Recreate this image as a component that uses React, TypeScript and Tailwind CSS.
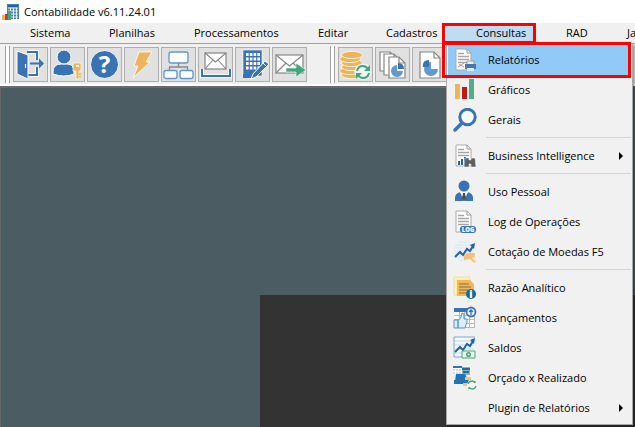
import React from "react";

const B = "#3a73b3";
const O = "#ecb45c";
const G = "#3fa77c";

function AppLogo() {
  return (
    <svg width="18" height="18" viewBox="0 0 18 18" aria-hidden="true">
      <rect x="5" y="1" width="12" height="15" fill="#4a80b5" />
      <rect x="6" y="2" width="10" height="2" fill="#2f5f96" />
      <path d="M6 5h10M6 8h10M6 11h10M6 14h10M8.5 5v11M11.5 5v11M14.5 5v11" stroke="#e8f1f8" strokeWidth="1" />
      <rect x="0" y="12" width="3" height="5" fill={O} />
      <rect x="3" y="11" width="3" height="6" fill="#d0392b" />
      <rect x="6" y="8" width="3" height="9" fill={G} />
    </svg>
  );
}

function Sheet({ x, y, w, h }: { x: number; y: number; w: number; h: number }) {
  return (
    <g>
      <path d={`M${x} ${y}h${w - 6}l6 6v${h - 6}h${-w}z`} fill="#fff" stroke="#858585" strokeWidth="1.2" />
      <path d={`M${x + w - 6} ${y}v6h6`} fill="none" stroke="#858585" strokeWidth="1.2" />
    </g>
  );
}

const tools: Record<string, React.ReactNode> = {
  Sair: (
    <g>
      <path d="M14 4h9v8M23 19v8h-9" fill="none" stroke="#fff" strokeWidth="4" />
      <path d="M13 4h10v8M23 19v8H13" fill="none" stroke={B} strokeWidth="2" />
      <path d="M3 3l11 4v24L3 26z" fill={B} stroke="#fff" strokeWidth="1" />
      <path d="M16 15.5h9" fill="none" stroke={B} strokeWidth="2" />
      <path d="M25 10.500l5 5-5 5z" fill={B} />
      <path d="M11.500 16v4" stroke="#fff" strokeWidth="1.200" />
    </g>
  ),
  Usuários: (
    <g>
      <path d="M2 24q0-8 8-8h6q7 0 7 8v2q-10 4-21 0z" fill={B} stroke="#fff" />
      <circle cx="13" cy="9" r="7" fill={B} stroke="#fff" />
      <path d="M22 15h8v8h-2v8h-3v-8h-3z" fill={O} stroke="#fff" strokeWidth=".7" />
      <path d="M25 17h3v2h-3z" fill="#fff" />
      <path d="M28 26h2M28 29h2" stroke={O} strokeWidth="1.500" />
    </g>
  ),
  Ajuda: (
    <g>
      <circle cx="16.500" cy="16.500" r="14" fill={B} stroke="#fff" />
      <text x="16.500" y="25" textAnchor="middle" fontSize="24" fontWeight="700" fill="#fff">
        ?
      </text>
    </g>
  ),
  Atalhos: <path d="M14 4h13l-6 10h4L8 30l5-12H9z" fill={O} stroke="#fff" strokeWidth=".8" />,
  Organograma: (
    <g>
      <path d="M16.500 15v4M7.500 22v-3h18v3" fill="none" stroke="#888" strokeWidth="1.300" />
      <rect x="7" y="4" width="19" height="11" rx="2" fill="#fff" stroke="#5c96d0" strokeWidth="1.300" />
      <rect x="2" y="22.500" width="13" height="8" rx="2" fill="#fff" stroke="#5c96d0" strokeWidth="1.300" />
      <rect x="18" y="22.500" width="13" height="8" rx="2" fill="#fff" stroke="#5c96d0" strokeWidth="1.300" />
    </g>
  ),
  Caixa: (
    <g>
      <rect x="6" y="5" width="21" height="16" fill="#fff" stroke="#858585" strokeWidth="1.200" />
      <path d="M6 5l10.500 9L27 5M6 21l8-9M27 21l-8-9" fill="none" stroke="#858585" strokeWidth="1.100" />
      <path d="M3 21v7h28v-7" fill="none" stroke="#fff" strokeWidth="3.500" />
      <path d="M3 21v7h28v-7" fill="none" stroke={B} strokeWidth="2" />
    </g>
  ),
  Empresa: (
    <g>
      <path d="M7 2h19v26H7z" fill={B} stroke="#fff" strokeWidth=".6" />
      <path d="M10 6.500h14M10 11h14M10 15.500h14M10 20h14" stroke="#fff" strokeWidth="2.800" strokeDasharray="2.600 1.200" />
      <path d="M7 26h12v4H7z" fill={B} />
      <path d="M29 13l4 3-13 13-5 2 2-5z" fill={B} stroke="#fff" />
      <path d="M27 15l4 4" stroke="#fff" />
    </g>
  ),
  Enviar: (
    <g>
      <rect x="3" y="7" width="27" height="18" fill="#fff" stroke="#858585" strokeWidth="1.200" />
      <path d="M3 7l13.500 11L30 7M3 25l10-10M30 25L20 15" fill="none" stroke="#858585" strokeWidth="1.200" />
      <path d="M13 20h10v-5l10 7-10 7v-5H13z" fill={G} stroke="#fff" strokeWidth=".6" />
    </g>
  ),
  Moedas: (
    <g>
      <g fill={O} stroke="#fff3d8">
        {[26, 22, 18, 14, 10, 6].map((y, i) => (
          <ellipse key={y} cx={i % 3 === 1 ? 11 : 13} cy={y + 1} rx="10.500" ry="3.600" />
        ))}
      </g>
      <circle cx="24" cy="24" r="8.500" fill="#f3f3f3" />
      <path d="M18 23q1-5 6-5 3 0 5 3M30 25q-1 5-6 5-3 0-5-3" fill="none" stroke={G} strokeWidth="2" />
      <path d="M31 17v6h-6zM17 31v-6h6z" fill={G} />
    </g>
  ),
  Relatórios: (
    <g>
      <Sheet x={4} y={4} w={16} h={19} />
      <Sheet x={8} y={6} w={16} h={21} />
      <Sheet x={13} y={9} w={16} h={21} />
      <path d="M21 17v6h6a6 6 0 1 1-6-6z" fill="#6298d0" />
      <path d="M22 15q6 0 6 6h-6z" fill={B} />
    </g>
  ),
  Gráfico: (
    <g>
      <Sheet x={7} y={4} w={20} h={26} />
      <path d="M18 14v7h7a7 7 0 1 1-7-7z" fill="#6298d0" />
      <path d="M16 12v7h-6q-1-7 6-7z" fill={B} />
    </g>
  ),
};

function Page() {
  return (
    <g>
      <path d="M3 1h11l4 4v17H3z" fill="#fff" stroke="#aaa" />
      <path d="M14 1v4h4" fill="none" stroke="#999" />
      <path d="M5 5.500h6M5 8.500h11M5 11.500h11M5 14.500h11" stroke="#a6a6a6" strokeWidth="1.400" />
    </g>
  );
}

function Trend() {
  return (
    <g>
      <path d="M2 16l5-5 3 3 4-6 3 2 3-5" fill="none" stroke="#2262a8" strokeWidth="2" />
      <path d="M17 4l5-2-1 6z" fill="#2262a8" />
    </g>
  );
}

function Table() {
  return (
    <g>
      <path d="M1 2h21v20H1z" fill="#fff" />
      <path d="M1 9.500h21M1 13.500h21M1 17.500h21M1 21.500h21M6.500 3v19M11.500 3v19M16.500 3v19M21.500 3v19" stroke="#b7b7b7" />
      <path d="M1 2h18v4H1z" fill={B} />
    </g>
  );
}

type Item = { label: string; icon?: React.ReactNode; sub?: boolean; active?: boolean };

const groups: Item[][] = [
  [
    {
      label: "Relatórios",
      active: true,
      icon: (
        <g>
          <Page />
          <path d="M5 19l6-4M6 16l5 3" stroke="#db8c8c" />
          <path d="M14 13h7v9h-7z" fill="#e9f1f8" stroke="#777" strokeWidth=".6" />
          <path d="M12 16h11v5H12z" fill="#4678aa" />
          <path d="M14 20h7v3h-7z" fill="#dceaf6" />
        </g>
      ),
    },
    {
      label: "Gráficos",
      icon: (
        <g>
          <path d="M2 6h5v15H2z" fill={O} />
          <path d="M9 9h5v12H9z" fill="#c51a14" />
          <path d="M16 1h5v20h-5z" fill="#4bb087" />
        </g>
      ),
    },
    {
      label: "Gerais",
      icon: (
        <g fill="none" stroke={B}>
          <circle cx="14.500" cy="9" r="7.700" strokeWidth="3" fill="#f6f8fa" />
          <path d="M9 15l-7 7" strokeWidth="3.500" strokeLinecap="round" />
        </g>
      ),
    },
  ],
  [
    {
      label: "Business Intelligence",
      sub: true,
      icon: (
        <g>
          <Page />
          <path d="M4 13h13v8H4z" fill="#fff" />
          <path d="M6 21v-4M9 21v-6M12 21v-8" stroke="#2463a6" strokeWidth="2" />
          <path d="M12 14h4v2h2v-2h4l1 9h-5v-3h-2v3h-5z" fill="#5f5f5f" stroke="#fff" strokeWidth=".5" />
        </g>
      ),
    },
  ],
  [
    {
      label: "Uso Pessoal",
      icon: (
        <g>
          <path d="M2 18q0-5 6-6h6q6 1 6 6v3H2z" fill={B} />
          <path d="M7 12h8l-4 9z" fill="#fff" />
          <path d="M10 13h2l1 5-2 3-2-3z" fill="#505050" />
          <circle cx="11" cy="6" r="5.500" fill={B} />
        </g>
      ),
    },
    {
      label: "Log de Operações",
      icon: (
        <g>
          <Page />
          <rect x="7" y="16" width="16" height="7" rx="3" fill={B} />
          <text x="15" y="22" textAnchor="middle" fontSize="6" fontWeight="800" fill="#fff">
            LOG
          </text>
        </g>
      ),
    },
    {
      label: "Cotação de Moedas F5",
      icon: (
        <g>
          <path d="M5 2h12M2 5h17M1 8h19M1 11h19M1 14h18M3 17h13M5 20h8" stroke="#d3e5f3" />
          <g transform="translate(0 1)">
            <Trend />
          </g>
          <path d="M11 15l4-2h7v4l-3 1 4 4-2 1-4-4-6 1z" fill="#f4c07a" />
        </g>
      ),
    },
  ],
  [
    {
      label: "Razão Analítico",
      icon: (
        <g>
          <path d="M1 1h16v18H1z" fill="#fff1bd" stroke="#fbda90" />
          <path d="M4 4h13l4 4v12H4z" fill="#f2b95a" />
          <path d="M6 8h10M6 11h12M6 14h9M6 17h7" stroke="#8b6a3b" />
          <circle cx="18" cy="18" r="5" fill="#1468a5" />
          <text x="18" y="22" textAnchor="middle" fontSize="10" fontWeight="800" fill="#fff">
            i
          </text>
        </g>
      ),
    },
    {
      label: "Lançamentos",
      icon: (
        <g>
          <Table />
          <circle cx="18" cy="6" r="4.500" fill="#e8f2fc" stroke={B} strokeWidth="1.800" />
          <path d="M18 9V4M16 6l2-2 2 2" stroke={B} strokeWidth="1.300" fill="none" />
          <path d="M1 14h4v8H1zM5 15l3-4 1-4 2 1v5h3v3l-2 6H5z" fill="#dceefb" stroke="#5593cc" />
        </g>
      ),
    },
    {
      label: "Saldos",
      icon: (
        <g>
          <path d="M1 1h21v19H1z" fill="#f4f9fd" />
          <path d="M1 5h20M1 9h20M1 13h20M1 17h20" stroke="#bdd7ec" />
          <path d="M1 1h21M1 1v20h8" fill="none" stroke="#7fa6c9" />
          <Trend />
          <path d="M9 15h13v7H9z" fill="#e6f7ec" stroke="#4aa678" />
          <circle cx="15.500" cy="18.500" r="1.800" fill="none" stroke="#4aa678" strokeWidth="1.500" />
        </g>
      ),
    },
    {
      label: "Orçado x Realizado",
      icon: (
        <g>
          <path d="M0 0h18v8H0z" fill="#fff" />
          <path d="M0 1h9" stroke="#2879ac" strokeWidth="2" />
          <path d="M0 4h9M0 7h9" stroke="#a9b9c5" strokeDasharray="2 1" />
          <path d="M9 1h8v8H9z" fill="#8baec4" />
          <path d="M9 3h8M10 6h6" stroke="#286b99" strokeWidth="2" />
          <path d="M3 8h9l4 7H2zM1 14h14v4H1z" fill="#2374b6" />
          <path d="M12 11h6v3h-6zM10 17h7v3h-7z" fill="#f4c36b" />
          <circle cx="19" cy="19" r="5" fill="#f8fbf9" />
          <path d="M15 18q1-3 4-3 2 0 3 2v-2M23 20q-1 3-4 3-2 0-3-2v2" fill="none" stroke="#45ad80" strokeWidth="1.400" />
        </g>
      ),
    },
    { label: "Plugin de Relatórios", sub: true },
  ],
];

function Tool({ name }: { name: string }) {
  return (
    <button type="button" aria-label={name} className="h-[35px] w-[35px] shrink-0 border border-[#adadad] bg-[#e1e1e1]">
      <svg width="33" height="33" viewBox="0 0 33 33" aria-hidden="true">
        {tools[name]}
      </svg>
    </button>
  );
}

function Grip() {
  return <span className="mr-[3px] h-[37px] w-[5px] shrink-0 border-x border-[#a0a0a0] bg-white" />;
}

function DropMenu() {
  return (
    <div className="absolute top-full left-0 z-10 w-[187px] border border-[#a8a8a8] bg-[#f1f1f1] p-px shadow-[2px_2px_2px_rgba(0,0,0,0.35)]">
      {groups.map((group, g) => (
        <React.Fragment key={g}>
          {g > 0 && (
            <div className="h-[6px] pt-[2px] pl-[38px]">
              <hr className="border-[#d5d5d5]" />
            </div>
          )}
          {group.map((item) => (
            <button
              key={item.label}
              type="button"
              className={`relative flex h-[30px] w-full items-center pl-[5px] text-left ${item.active ? "bg-[#91c9f7]" : ""}`}
            >
              {item.icon ? (
                <svg width="24" height="24" viewBox="0 0 24 24" className="mr-[11px] shrink-0" aria-hidden="true">
                  {item.icon}
                </svg>
              ) : (
                <span className="w-[35px] shrink-0" />
              )}
              <span className="flex-1 whitespace-nowrap">{item.label}</span>
              {item.sub && (
                <svg width="4" height="8" viewBox="0 0 4 8" className="mr-2" aria-hidden="true">
                  <path d="M0 0l4 4-4 4z" fill="#000" />
                </svg>
              )}
              {item.active && (
                <span className="pointer-events-none absolute -inset-y-[3px] right-0 -left-[6px] border-[3px] border-[#fd0000]" />
              )}
            </button>
          ))}
        </React.Fragment>
      ))}
    </div>
  );
}

const menus = [
  { label: "Sistema", width: "w-[79px]" },
  { label: "Planilhas", width: "w-[85px]" },
  { label: "Processamentos", width: "w-[124px]" },
  { label: "Editar", width: "w-[68px]" },
  { label: "Cadastros", width: "w-[90px]" },
  { label: "Consultas", width: "w-[90px]", open: true },
  { label: "RAD", width: "w-[61px]" },
  { label: "Janelas", width: "w-[80px]" },
];

export default function App() {
  return (
    <div className="flex h-screen flex-col overflow-hidden bg-[#f0f0f0] font-['Open_Sans','Noto_Sans',sans-serif] text-[11px] leading-4 text-black">
      <header className="flex h-[23px] shrink-0 items-center gap-1 bg-white pl-[2px]">
        <AppLogo />
        <h1>Contabilidade v6.11.24.01</h1>
      </header>
      <nav className="flex h-5 shrink-0">
        {menus.map((m) => (
          <div key={m.label} className={`relative h-5 shrink-0 ${m.width}`}>
            <button type="button" className={`h-5 w-full pl-[30px] text-left whitespace-nowrap ${m.open ? "bg-[#c0dcf3]" : ""}`}>
              {m.label}
            </button>
            {m.open && <DropMenu />}
            {m.open && (
              <span className="pointer-events-none absolute top-0 right-0 -bottom-px -left-1 z-20 border-[3px] border-[#fd0000]" />
            )}
          </div>
        ))}
      </nav>
      <div className="flex h-[43px] shrink-0 items-center border-t border-b-2 border-t-[#a0a0a0] border-b-white pl-[5px]">
        <Grip />
        <div className="flex gap-[2px]">
          {["Sair", "Usuários", "Ajuda", "Atalhos", "Organograma", "Caixa", "Empresa", "Enviar"].map((n) => (
            <Tool key={n} name={n} />
          ))}
        </div>
        <div className="w-[23px] shrink-0" />
        <Grip />
        <div className="flex gap-[2px]">
          {["Moedas", "Relatórios", "Gráfico"].map((n) => (
            <Tool key={n} name={n} />
          ))}
        </div>
      </div>
      <main className="flex flex-1 border-t-2 border-l border-[#696969] bg-[#4b5d63]">
        <div className="mt-[207px] ml-[259px] flex-1 bg-[#333333]" />
      </main>
    </div>
  );
}
